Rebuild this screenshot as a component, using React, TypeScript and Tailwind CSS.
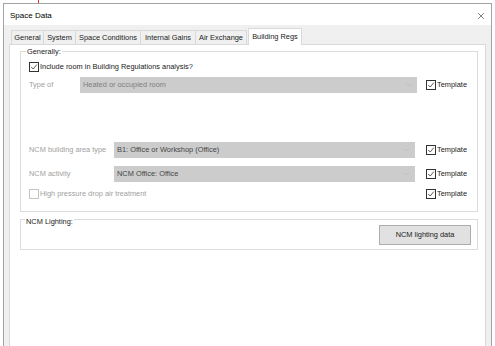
import { ChevronDown, X } from "lucide-react";

type Tab = { label: string; width: string };

const TABS: Tab[] = [
  { label: "General", width: "w-[33px]" },
  { label: "System", width: "w-[33px]" },
  { label: "Space Conditions", width: "w-[66px]" },
  { label: "Internal Gains", width: "w-[56px]" },
  { label: "Air Exchange", width: "w-[52px]" },
];

// small win32 style check box
function CheckBox({ checked, disabled }: { checked?: boolean; disabled?: boolean }) {
  return (
    <span
      className={`flex w-[10px] h-[10px] shrink-0 items-center justify-center bg-white border ${
        disabled ? "border-[#c4c4c4]" : "border-[#333333]"
      }`}
    >
      {checked && (
        <svg viewBox="0 0 10 10" className="w-[8px] h-[8px]">
          <polyline points="1.5,5 4,7.5 8.5,2" fill="none" stroke="#333333" strokeWidth="1" />
        </svg>
      )}
    </span>
  );
}

function Template() {
  return (
    <div className="flex items-center gap-[1px]">
      <CheckBox checked />
      <span className="text-[#1a1a1a]">Template</span>
    </div>
  );
}

function Select({ value, width, dark }: { value: string; width: string; dark?: boolean }) {
  return (
    <div
      className={`flex h-[16px] items-center justify-between bg-[#cccccc] pl-[3px] pr-[4px] ${width} ${
        dark ? "text-[#454545]" : "text-[#808080]"
      }`}
    >
      <span>{value}</span>
      <ChevronDown className="w-[8px] h-[8px] text-[#b0b0b0]" strokeWidth={1.5} />
    </div>
  );
}

export default function App() {
  return (
    <div
      className="w-[495px] h-[346px] bg-white overflow-hidden flex flex-col text-[7.4px] leading-none"
      style={{ fontFamily: '"Liberation Sans", Arial, sans-serif' }}
    >
      {/* red marker above the dialog */}
      <div className="ml-[38px] w-px h-[3px] shrink-0 bg-[#e0322b]" />

      <div className="ml-[3px] w-[489px] flex-1 flex flex-col border border-b-0 border-[#a3a3a3]">
        {/* Title bar */}
        <div className="h-[21px] shrink-0 bg-white flex items-center justify-between pl-[6px] pr-[5px] pt-[2px]">
          <span className="text-[8px] text-black">Space Data</span>
          <X className="w-[10px] h-[10px] text-[#333333]" strokeWidth={1.5} />
        </div>

        {/* Client area */}
        <div className="flex-1 flex flex-col bg-[#f0f0f0] px-[5px]">
          {/* Tabs */}
          <div className="h-[19px] shrink-0 flex items-end pl-[2px]">
            {TABS.map((t) => (
              <div
                key={t.label}
                className={`${t.width} h-[14px] flex items-center justify-center border border-b-0 border-[#d9d9d9] -mr-px text-[#1a1a1a]`}
              >
                {t.label}
              </div>
            ))}
            <div className="relative z-10 -mb-px ml-[2px] w-[54px] h-[17px] flex items-center justify-center bg-white border border-b-0 border-[#d9d9d9] text-[#1a1a1a]">
              Building Regs
            </div>
          </div>

          {/* Tab page */}
          <div className="flex-1 bg-white border border-b-0 border-[#d9d9d9] pl-[10px] pr-[7px] pt-[6px]">
            {/* Generally group */}
            <div className="relative h-[161px] border border-[#dcdcdc] flex flex-col pl-[8px] pr-[10px]">
              <span className="absolute left-[5px] -top-[4px] bg-white px-[1px] text-[#1a1a1a]">Generally:</span>

              <div className="mt-[10px] h-[10px] flex items-center gap-[1px] text-[#1a1a1a]">
                <CheckBox checked />
                <span>Include room in Building Regulations analysis?</span>
              </div>

              <div className="mt-[5px] h-[16px] flex items-center">
                <span className="w-[51px] text-[#a0a0a0]">Type of</span>
                <Select value="Heated or occupied room" width="w-[337px]" />
                <div className="ml-auto">
                  <Template />
                </div>
              </div>

              <div className="mt-[49px] h-[16px] flex items-center">
                <span className="w-[85px] text-[#a0a0a0]">NCM building area type</span>
                <Select value="B1: Office or Workshop (Office)" width="w-[301px]" dark />
                <div className="ml-auto">
                  <Template />
                </div>
              </div>

              <div className="mt-[8px] h-[16px] flex items-center">
                <span className="w-[85px] text-[#a0a0a0]">NCM activity</span>
                <Select value="NCM Office: Office" width="w-[301px]" dark />
                <div className="ml-auto">
                  <Template />
                </div>
              </div>

              <div className="mt-[4px] h-[16px] flex items-center">
                <div className="flex items-center gap-[1px] text-[#a0a0a0]">
                  <CheckBox disabled />
                  <span>High pressure drop air treatment</span>
                </div>
                <div className="ml-auto">
                  <Template />
                </div>
              </div>
            </div>

            {/* NCM Lighting group */}
            <div className="relative mt-[7px] h-[31px] border border-[#dcdcdc] flex justify-end pt-[5px] pr-[6px]">
              <span className="absolute left-[4px] -top-[2px] bg-white px-[1px] text-[#1a1a1a]">NCM Lighting:</span>
              <button className="w-[92px] h-[20px] bg-[#e1e1e1] border border-[#adadad] text-[#1a1a1a] text-[7.4px]">
                NCM lighting data
              </button>
            </div>
          </div>
        </div>
      </div>
    </div>
  );
}
